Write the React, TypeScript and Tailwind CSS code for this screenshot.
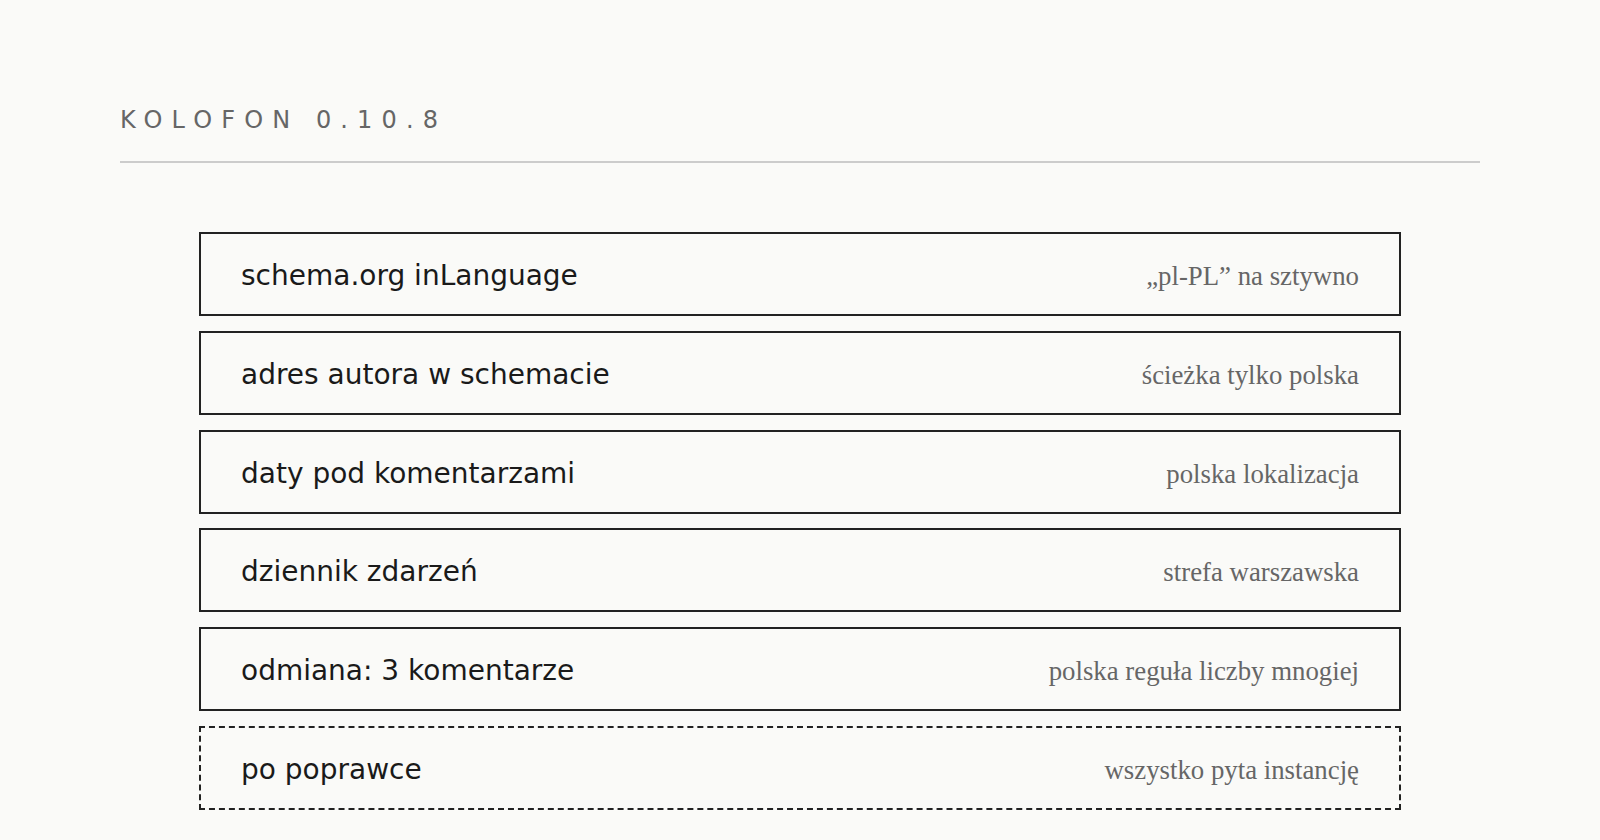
const rows = [
  { label: 'schema.org inLanguage', note: '„pl-PL” na sztywno' },
  { label: 'adres autora w schemacie', note: 'ścieżka tylko polska' },
  { label: 'daty pod komentarzami', note: 'polska lokalizacja' },
  { label: 'dziennik zdarzeń', note: 'strefa warszawska' },
  { label: 'odmiana: 3 komentarze', note: 'polska reguła liczby mnogiej' },
]

function Row({ label, note, dashed }: { label: string; note: string; dashed?: boolean }) {
  return (
    <div
      className={`flex h-[84px] items-center justify-between border-2 px-[40px] pt-[4px] ${
        dashed ? 'border-dashed border-[#222]' : 'border-[#222]'
      }`}
    >
      <span className="font-['DejaVu_Sans',sans-serif] text-[28px] text-[#1a1a1a]">{label}</span>
      <span className="font-['Liberation_Serif',serif] text-[26.8px] text-[#666]">{note}</span>
    </div>
  )
}

export default function App() {
  return (
    <div className="min-h-screen bg-[#fafaf8] px-[120px] pt-[100px]">
      <h1 className="font-['DejaVu_Sans',sans-serif] text-[24px] leading-[40px] tracking-[0.38em] text-[#666]">
        KOLOFON 0.10.8
      </h1>
      <div className="mt-[21px] border-t-2 border-[#ccc]" />

      <div className="mx-auto mt-[69px] flex max-w-[1202px] flex-col gap-[14.8px]">
        {rows.map((r) => (
          <Row key={r.label} label={r.label} note={r.note} />
        ))}
        <Row label="po poprawce" note="wszystko pyta instancję" dashed />
      </div>
    </div>
  )
}
